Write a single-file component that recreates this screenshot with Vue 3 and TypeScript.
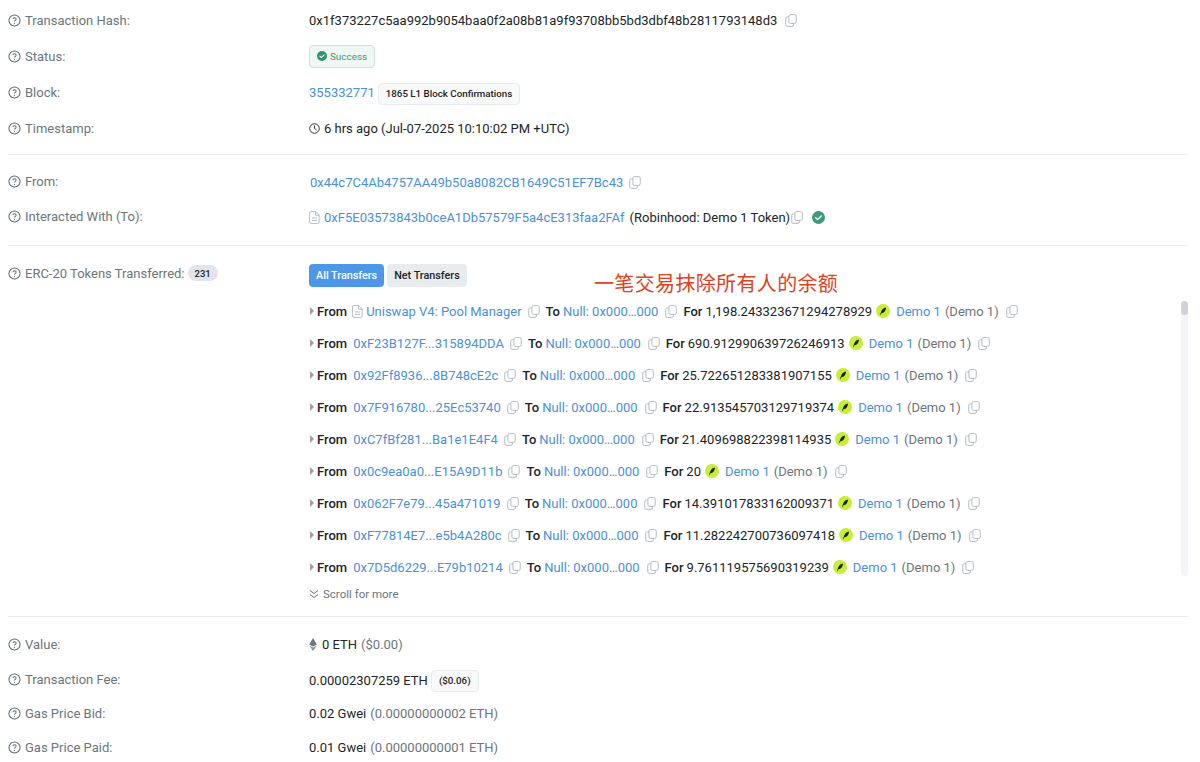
<script setup lang="ts">
interface Transfer { addr: string; doc?: boolean; amount: string; }
const transfers: Transfer[] = [
  { addr: 'Uniswap V4: Pool Manager', doc: true, amount: '1,198.243323671294278929' },
  { addr: '0xF23B127F...315894DDA', amount: '690.912990639726246913' },
  { addr: '0x92Ff8936...8B748cE2c', amount: '25.722651283381907155' },
  { addr: '0x7F916780...25Ec53740', amount: '22.913545703129719374' },
  { addr: '0xC7fBf281...Ba1e1E4F4', amount: '21.409698822398114935' },
  { addr: '0x0c9ea0a0...E15A9D11b', amount: '20' },
  { addr: '0x062F7e79...45a471019', amount: '14.391017833162009371' },
  { addr: '0xF77814E7...e5b4A280c', amount: '11.282242700736097418' },
  { addr: '0x7D5d6229...E79b10214', amount: '9.761119575690319239' },
]
</script>

<template>
  <svg width="0" height="0" class="defs">
    <defs>
      <symbol id="help" viewBox="0 0 14 14">
        <circle cx="7" cy="7" r="6" fill="none" stroke="currentColor" stroke-width="1.1" />
        <path d="M5.3 5.6c0-1 .8-1.6 1.8-1.6s1.7.6 1.7 1.5c0 1.3-1.7 1.3-1.8 2.6" fill="none" stroke="currentColor" stroke-width="1.1" />
        <circle cx="7" cy="10" r=".7" fill="currentColor" />
      </symbol>
      <symbol id="copy" viewBox="0 0 13 14">
        <rect x="4.2" y=".6" width="8" height="9.6" rx="2" fill="none" stroke="currentColor" stroke-width="1" />
        <path d="M4.2 3H2.6A1.8 1.8 0 0 0 .8 4.8v6.6a2 2 0 0 0 2 2h4.6a1.8 1.8 0 0 0 1.8-1.8v-1.4" fill="none" stroke="currentColor" stroke-width="1" />
      </symbol>
      <symbol id="doc" viewBox="0 0 11 13">
        <path d="M1.8.6h5L10.2 4v7a1.4 1.4 0 0 1-1.4 1.4h-7A1.4 1.4 0 0 1 .4 11V2A1.4 1.4 0 0 1 1.8.6zM6.6.8V4.2h3.4M3 7h5M3 9.5h5" fill="none" stroke="currentColor" stroke-width=".9" />
      </symbol>
      <symbol id="check" viewBox="0 0 14 14">
        <circle cx="7" cy="7" r="7" fill="currentColor" />
        <path d="M4 7.2l2.1 2.1L10 5.3" fill="none" stroke="#fff" stroke-width="1.5" stroke-linecap="round" stroke-linejoin="round" />
      </symbol>
      <symbol id="token" viewBox="0 0 14 14">
        <circle cx="7" cy="7" r="7" fill="#c8ee34" />
        <path d="M10 3.4C8 3.6 5.8 5.2 5 8l-.9 2.8.6.2.9-2C8 9 9.8 6.6 10 3.4z" fill="#16200c" />
      </symbol>
    </defs>
  </svg>

  <main class="page">
    <section class="group first">
      <div class="row h36">
        <div class="label"><svg class="help"><use href="#help" /></svg>Transaction Hash:</div>
        <div class="value">
          <span class="dark">0x1f373227c5aa992b9054baa0f2a08b81a9f93708bb5bd3dbf48b2811793148d3</span>
          <svg class="copy gap8"><use href="#copy" /></svg>
        </div>
      </div>
      <div class="row h36">
        <div class="label"><svg class="help"><use href="#help" /></svg>Status:</div>
        <div class="value">
          <span class="success"><svg class="ok-small"><use href="#check" /></svg>Success</span>
        </div>
      </div>
      <div class="row h36">
        <div class="label"><svg class="help"><use href="#help" /></svg>Block:</div>
        <div class="value">
          <a class="link">355332771</a>
          <span class="pill conf">1865 L1 Block Confirmations</span>
        </div>
      </div>
      <div class="row h36">
        <div class="label"><svg class="help"><use href="#help" /></svg>Timestamp:</div>
        <div class="value dark">
          <svg class="clock" viewBox="0 0 12 12"><circle cx="6" cy="6" r="5.2" fill="none" stroke="#212529" stroke-width="1" /><path d="M6 2.8V6l2.2 1.4" fill="none" stroke="#212529" stroke-width="1" /></svg>
          <span>6 hrs ago (Jul-07-2025 10:10:02 PM +UTC)</span>
        </div>
      </div>
    </section>

    <section class="group second">
      <div class="row h35">
        <div class="label"><svg class="help"><use href="#help" /></svg>From:</div>
        <div class="value nudge">
          <a class="link from-addr">0x44c7C4Ab4757AA49b50a8082CB1649C51EF7Bc43</a>
          <svg class="copy gap6"><use href="#copy" /></svg>
        </div>
      </div>
      <div class="row h35">
        <div class="label"><svg class="help"><use href="#help" /></svg>Interacted With (To):</div>
        <div class="value nudge">
          <svg class="doc"><use href="#doc" /></svg>
          <a class="link">0xF5E03573843b0ceA1Db57579F5a4cE313faa2FAf</a>
          <span class="dark to-name">(Robinhood: Demo 1 Token)</span>
          <svg class="copy gap1"><use href="#copy" /></svg>
          <svg class="verified"><use href="#check" /></svg>
        </div>
      </div>
    </section>

    <section class="group third">
      <div class="row tokens">
        <div class="label top"><svg class="help"><use href="#help" /></svg>ERC-20 Tokens Transferred:<span class="count">231</span></div>
        <div class="panel">
          <div class="tabs">
            <span class="tab active">All Transfers</span>
            <span class="tab">Net Transfers</span>
          </div>
          <div class="note">一笔交易抹除所有人的余额</div>
          <ul class="list">
            <li v-for="t in transfers" :key="t.addr" class="transfer">
              <span class="caret"></span>
              <b class="kw from">From</b>
              <svg v-if="t.doc" class="doc tight"><use href="#doc" /></svg>
              <a class="link">{{ t.addr }}</a>
              <svg class="copy mid"><use href="#copy" /></svg>
              <b class="kw">To</b>
              <a class="link null">Null: 0x000…000</a>
              <svg class="copy mid"><use href="#copy" /></svg>
              <b class="kw">For</b>
              <span class="dark">{{ t.amount }}</span>
              <svg class="token"><use href="#token" /></svg>
              <a class="link">Demo 1</a>
              <span class="grey sym">(Demo 1)</span>
              <svg class="copy mid last"><use href="#copy" /></svg>
            </li>
          </ul>
          <div class="more">
            <svg class="chev" viewBox="0 0 10 10"><path d="M1 1.5l4 3 4-3M1 5.5l4 3 4-3" fill="none" stroke="#6c757d" stroke-width="1" /></svg>
            Scroll for more
          </div>
          <div class="track"><div class="thumb"></div></div>
        </div>
      </div>
    </section>

    <section class="group fourth">
      <div class="row h-value">
        <div class="label"><svg class="help"><use href="#help" /></svg>Value:</div>
        <div class="value">
          <svg class="eth" viewBox="0 0 8 13"><path d="M4 0L.2 6.4 4 8.6l3.8-2.2z" fill="#6c757d" /><path d="M.2 7.4L4 13l3.8-5.6L4 9.6z" fill="#8b939b" /></svg>
          <span class="dark">0 ETH</span>
          <span class="grey usd">($0.00)</span>
        </div>
      </div>
      <div class="row h-fee">
        <div class="label"><svg class="help"><use href="#help" /></svg>Transaction Fee:</div>
        <div class="value fee-value">
          <span class="dark">0.00002307259 ETH</span>
          <span class="pill fee">($0.06)</span>
        </div>
      </div>
      <div class="row h-bid">
        <div class="label"><svg class="help"><use href="#help" /></svg>Gas Price Bid:</div>
        <div class="value"><span class="dark">0.02 Gwei</span><span class="grey usd">(0.00000000002 ETH)</span></div>
      </div>
      <div class="row h-paid">
        <div class="label"><svg class="help"><use href="#help" /></svg>Gas Price Paid:</div>
        <div class="value"><span class="dark">0.01 Gwei</span><span class="grey usd">(0.00000000001 ETH)</span></div>
      </div>
    </section>
  </main>
</template>

<style>
html, body { background: #fff; margin: 0; }
</style>

<style scoped>
.defs { position: absolute; }
.page {
  width: 1180px;
  padding: 2px 12px 0 8px;
  font-family: Roboto, "Liberation Sans", sans-serif;
  font-size: 13px;
  color: #212529;
  height: 760px;
  overflow: hidden;
}
.group { border-bottom: 1px solid #e9ecef; }
.group.first { height: 152px; }
.group.second { padding-top: 9px; height: 81px; }
.group.third { padding-top: 18px; height: 352px; }
.group.fourth { border-bottom: 0; padding-top: 10px; }
.row { display: grid; grid-template-columns: 301px 1fr; align-items: center; }
.h36 { height: 36px; }
.h35 { height: 35px; }
.h-value { height: 35px; }
.h-fee { height: 34px; }
.h-bid { height: 35px; }
.h-paid { height: 32px; }
.row.tokens { align-items: start; height: 100%; }
.label { display: flex; align-items: center; color: #6c757d; white-space: nowrap; }
.label.top { padding-top: 1px; }
.help { width: 13px; height: 13px; margin-right: 4px; color: #5f6870; flex: none; }
.value { display: flex; align-items: center; white-space: nowrap; }
.nudge { padding-top: 2px; }
.fee-value { padding-top: 3px; }
.dark { color: #212529; }
.grey { color: #6c757d; }
.link { color: #4a90dc; text-decoration: none; }
.from-addr { margin-left: 1px; }
.copy { width: 12px; height: 13px; color: #adb5bd; flex: none; }
.gap8 { margin-left: 8px; }
.gap6 { margin-left: 6px; }
.gap1 { margin-left: 1px; }
.success {
  display: inline-flex; align-items: center; height: 23px; box-sizing: border-box;
  padding: 0 7px 0 7px; font-size: 9.9px; color: #3f9877;
  background: #eef7f4; border: 1px solid #cfe3dc; border-radius: 4px;
}
.ok-small { width: 10px; height: 10px; color: #2f9270; margin-right: 3px; }
.pill {
  display: inline-flex; align-items: center; box-sizing: border-box;
  background: #f8f9fa; border: 1px solid #e9ecef; border-radius: 4px;
  font-weight: 500; color: #1f2327; font-size: 9.75px;
}
.conf { height: 22px; padding: 0 7px; margin-left: 3px; margin-top: 3px; }
.fee { height: 22px; padding: 0 7px; margin-left: 3px; }
.clock { width: 11px; height: 11px; margin-right: 4px; }
.doc { width: 11px; height: 13px; color: #adb5bd; margin-right: 4px; flex: none; }
.doc.tight { margin-left: -1px; margin-right: 3px; }
.to-name { margin-left: 5px; }
.verified { width: 13px; height: 13px; color: #3d9a7c; margin-left: 9px; }
.count {
  display: inline-flex; align-items: center; height: 16px; padding: 0 7px; margin-left: 3px;
  background: #e2e5e9; border-radius: 8px; font-size: 9.5px; font-weight: 500; color: #212529;
}
.panel { position: relative; height: 100%; }
.tabs { display: flex; gap: 3px; }
.tab {
  display: inline-flex; align-items: center; height: 23px; padding: 0 7px;
  background: #e9ecef; border-radius: 4px; font-size: 10.8px; font-weight: 500; color: #212529;
}
.tab.active { background: #4c97e8; color: #fff; }
.note {
  position: absolute; left: 285px; top: 5px;
  font-family: "Noto Sans CJK SC", sans-serif; font-size: 20px; line-height: 28px; color: #df4222;
  white-space: nowrap; letter-spacing: .35px;
}
.list { list-style: none; margin: 8px 0 0; padding: 0; }
.transfer { display: flex; align-items: center; height: 32px; white-space: nowrap; }
.caret {
  width: 0; height: 0; border-left: 4px solid #9aa1a8; border-top: 4px solid transparent;
  border-bottom: 4px solid transparent; margin: 0 3px 0 1px;
}
.kw { font-weight: 500; color: #212529; margin-right: 3px; }
.kw.from { margin-right: 6px; }
.null { margin-right: 1px; }
.mid { margin: 0 6px; }
.mid.last { margin-left: 7px; }
.token { width: 14px; height: 14px; margin: 0 6px 0 4px; flex: none; }
.sym { margin-left: 4px; }
.more { display: flex; align-items: center; height: 22px; font-size: 11.5px; color: #6c757d; }
.chev { width: 10px; height: 10px; margin-right: 4px; }
.usd { margin-left: 4px; }
.eth { width: 8px; height: 13px; margin-right: 5px; }
.track {
  position: absolute; left: 872px; top: 37px; width: 7px; height: 275px;
  background: #f3f5f8; border-radius: 4px;
}
.thumb { height: 14px; background: #d0d3d8; border-radius: 4px; }
</style>
